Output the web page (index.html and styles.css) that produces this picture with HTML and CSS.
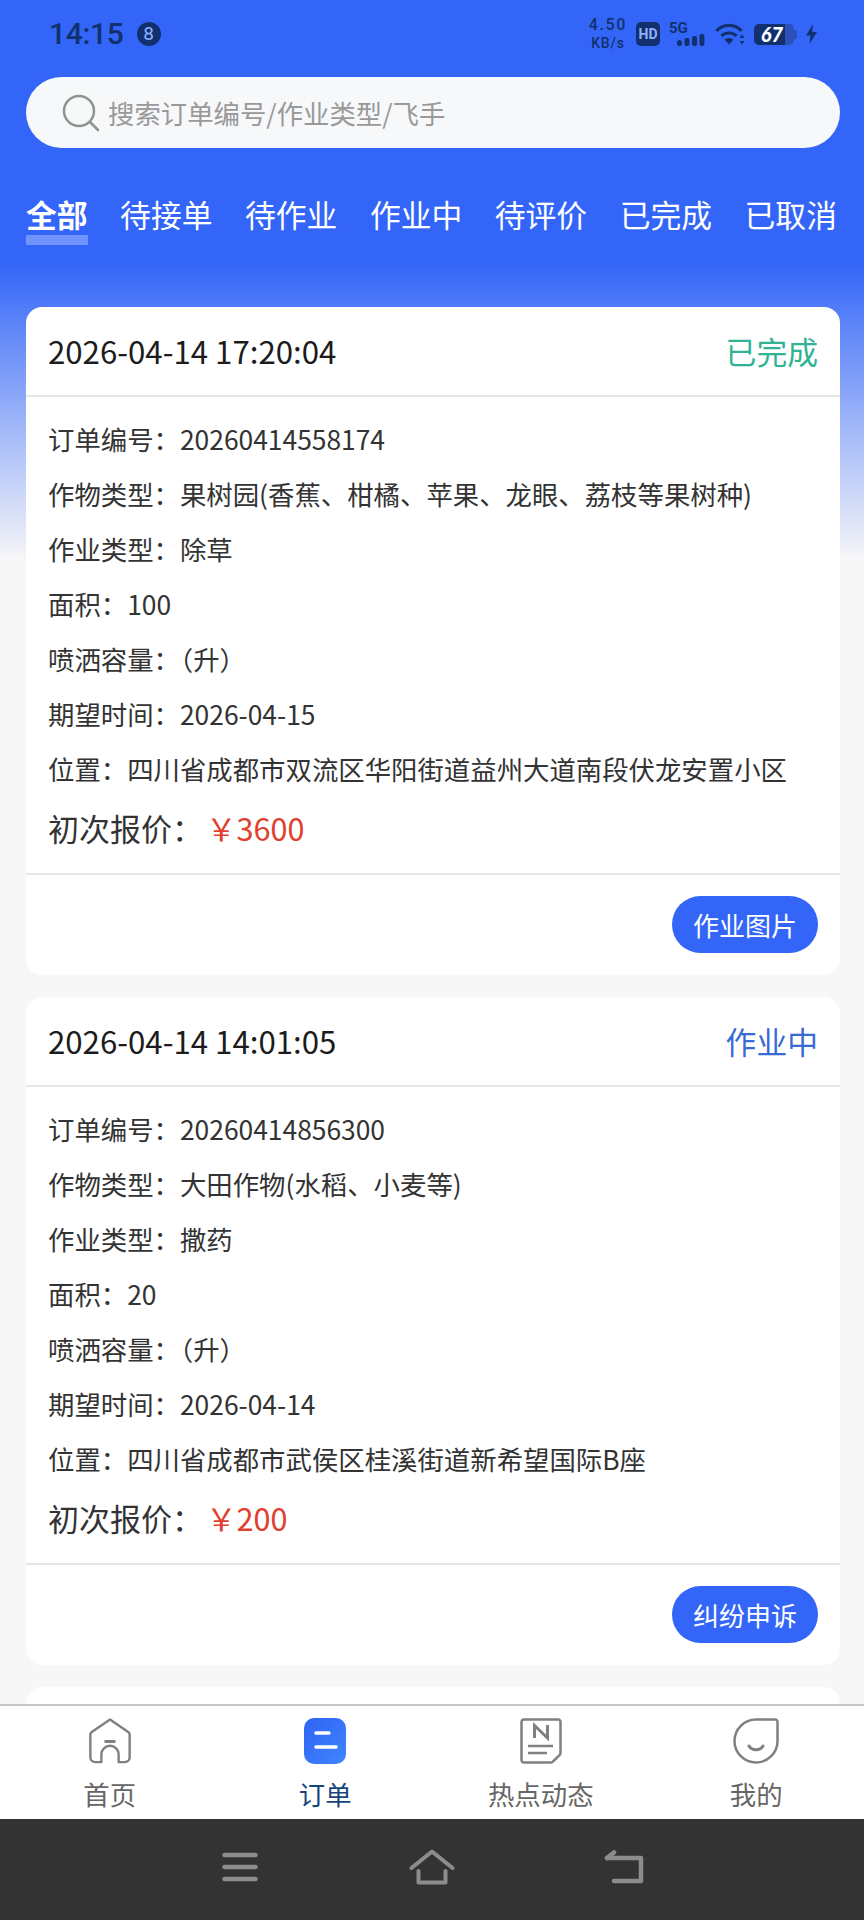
FILE: index.html
```html
<!DOCTYPE html>
<html lang="zh-CN">
<head>
    <meta charset="UTF-8">
    <meta name="viewport" content="width=device-width, initial-scale=1.0">
    <title>订单</title>
    <link rel="stylesheet" href="styles.css">
</head>
<body>
    <div class="page">
        <div class="status-bar">
            <div class="status-left">
                <span class="status-time">14:15</span>
                <span class="status-badge">8</span>
            </div>
            <div class="status-right">
                <div class="net-speed"><span>4.50</span><span>KB/s</span></div>
                <span class="hd-badge">HD</span>
                <div class="signal">
                    <span class="signal-label">5G</span>
                    <svg width="28" height="12" viewBox="0 0 28 12"><rect x="0" y="6" width="5" height="6" rx="2.5"/><rect x="7.5" y="4" width="5" height="8" rx="2"/><rect x="15" y="2" width="5" height="10" rx="2"/><rect x="22.500" y="0" width="5" height="12" rx="2"/></svg>
                </div>
                <svg class="wifi" width="30" height="22" viewBox="0 0 30 22" fill="none" stroke="#12306e" stroke-width="3.200"><path d="M1.500 8C8 .5 20 .5 26.500 8"/><path d="M6.500 13C10 9 18 9 21.500 13"/><path d="M14 21.500L9.500 16.500C12 14.500 16 14.500 18.500 16.500z" fill="#12306e" stroke="none"/><path d="M27 11.500l2.500 3.500h-5zM27 21.500l2.500-3.500h-5z" fill="#12306e" stroke="none"/></svg>
                <div class="battery"><span class="battery-level">67</span><span class="battery-tip"></span></div>
                <svg width="11" height="20" viewBox="0 0 11 20"><path d="M7 0L0 11.500h4.500L3.500 20 11 8H6.200z" fill="#12306e"/></svg>
            </div>
        </div>

        <div class="search-wrap">
            <div class="search-box">
                <svg width="38" height="38" viewBox="0 0 38 38" fill="none" stroke="#8f9493" stroke-width="2.500"><circle cx="17" cy="17" r="15"/><path d="M28 28l8 8" stroke-linecap="round"/></svg>
                <span>搜索订单编号/作业类型/飞手</span>
            </div>
        </div>

        <div class="tabs">
            <span class="tab tab-active">全部</span>
            <span class="tab">待接单</span>
            <span class="tab">待作业</span>
            <span class="tab">作业中</span>
            <span class="tab">待评价</span>
            <span class="tab">已完成</span>
            <span class="tab">已取消</span>
        </div>

        <div class="order-list">
            <div class="order-card">
                <div class="order-head">
                    <span class="order-date">2026-04-14 17:20:04</span>
                    <span class="order-status status-done">已完成</span>
                </div>
                <div class="order-body">
                    <div class="order-row">订单编号：20260414558174</div>
                    <div class="order-row">作物类型：果树园(香蕉、柑橘、苹果、龙眼、荔枝等果树种)</div>
                    <div class="order-row">作业类型：除草</div>
                    <div class="order-row">面积：100</div>
                    <div class="order-row">喷洒容量：（升）</div>
                    <div class="order-row">期望时间：2026-04-15</div>
                    <div class="order-row">位置：四川省成都市双流区华阳街道益州大道南段伏龙安置小区</div>
                    <div class="order-price">初次报价：<span class="price-value">￥3600</span></div>
                </div>
                <div class="order-foot"><button class="order-btn">作业图片</button></div>
            </div>

            <div class="order-card">
                <div class="order-head">
                    <span class="order-date">2026-04-14 14:01:05</span>
                    <span class="order-status status-working">作业中</span>
                </div>
                <div class="order-body">
                    <div class="order-row">订单编号：20260414856300</div>
                    <div class="order-row">作物类型：大田作物(水稻、小麦等)</div>
                    <div class="order-row">作业类型：撒药</div>
                    <div class="order-row">面积：20</div>
                    <div class="order-row">喷洒容量：（升）</div>
                    <div class="order-row">期望时间：2026-04-14</div>
                    <div class="order-row">位置：四川省成都市武侯区桂溪街道新希望国际B座</div>
                    <div class="order-price">初次报价：<span class="price-value">￥200</span></div>
                </div>
                <div class="order-foot"><button class="order-btn">纠纷申诉</button></div>
            </div>

            <div class="order-card"></div>
        </div>

        <div class="tabbar">
            <div class="tabbar-item">
                <svg width="46" height="48" viewBox="0 0 46 48" fill="none" stroke="#808080" stroke-width="2.500" stroke-linejoin="round" stroke-linecap="round"><path d="M23 1.500L42 14.500a3.500 3.500 0 0 1 1.500 3V41a5 5 0 0 1-5 5H32V38a9 9 0 0 0-18 0v8H7.500a5 5 0 0 1-5-5V17.500a3.500 3.500 0 0 1 1.500-3z"/><path d="M18.500 24.500h9" stroke-width="3"/></svg>
                <span>首页</span>
            </div>
            <div class="tabbar-item tabbar-active">
                <svg width="42" height="46" viewBox="0 0 42 46"><defs><linearGradient id="orderFill" x1="0" y1="0" x2="1" y2="1"><stop offset="0" stop-color="#2f62f2"/><stop offset="1" stop-color="#3f86ff"/></linearGradient></defs><rect width="42" height="46" rx="10" fill="url(#orderFill)"/><path d="M12 15h13M12 29h20" stroke="#fff" stroke-width="3.500" stroke-linecap="round"/></svg>
                <span>订单</span>
            </div>
            <div class="tabbar-item">
                <svg width="42" height="46" viewBox="0 0 42 46" fill="none" stroke="#808080" stroke-width="2.500"><path d="M4 1.500h34a2.500 2.500 0 0 1 2.500 2.500v31a3 3 0 0 1-1 2.200l-6.500 6.300a3 3 0 0 1-2 1H4A2.500 2.500 0 0 1 1.500 42V4A2.500 2.500 0 0 1 4 1.500z" stroke-linejoin="round"/><path d="M14.500 20V7.500L27.500 20V7" stroke-width="3"/><path d="M8 28h25" stroke-width="2.500"/><path d="M8 35h19" stroke-width="2.500"/></svg>
                <span>热点动态</span>
            </div>
            <div class="tabbar-item">
                <svg width="46" height="46" viewBox="0 0 46 46" fill="none" stroke="#808080" stroke-width="2.500"><path d="M23 1.500h19a2.500 2.500 0 0 1 2.500 2.500v19A21.500 21.500 0 1 1 23 1.500z"/><path d="M16 28c3 5 11 5 14 0" stroke-width="3" stroke-linecap="round"/></svg>
                <span>我的</span>
            </div>
        </div>

        <div class="nav-bar">
            <svg width="36" height="30" viewBox="0 0 36 30" fill="none" stroke="#8c8c8c" stroke-width="4.500" stroke-linecap="round"><path d="M2.500 3h31M2.500 15h31M2.500 27h31"/></svg>
            <svg width="46" height="36" viewBox="0 0 46 36" fill="none" stroke="#8c8c8c" stroke-width="4" stroke-linecap="round" stroke-linejoin="round"><path d="M2.500 19L23 2.500 43.500 19"/><path d="M9.500 22v11.500h27V22"/></svg>
            <svg width="40" height="34" viewBox="0 0 40 34" fill="none" stroke="#8c8c8c" stroke-width="4.500" stroke-linecap="round" stroke-linejoin="round"><path d="M10 31h27V8H3"/><path d="M10 2.500L3 8" stroke-width="4.500"/></svg>
        </div>
    </div>
</body>
</html>
```

FILE: styles.css
```css
* {
    box-sizing: border-box;
}
html, body {
    margin: 0;
    padding: 0;
}
body {
    font-family: "Noto Sans CJK SC", "Noto Sans", sans-serif;
    color: #333;
}
.page {
    width: 864px;
    height: 1920px;
    display: flex;
    flex-direction: column;
    overflow: hidden;
    background: linear-gradient(to bottom, #3366f8 0, #3366f8 262px, #f7f7f8 560px);
}

/* status bar */
.status-bar {
    height: 68px;
    flex-shrink: 0;
    padding: 0 47px 0 49px;
    display: flex;
    justify-content: space-between;
    align-items: center;
    color: #12306e;
}
.status-left {
    display: flex;
    align-items: center;
    gap: 13px;
}
.status-time {
    font-family: Roboto, sans-serif;
    font-size: 30px;
    line-height: 34px;
    font-weight: 500;
    letter-spacing: -0.3px;
}
.status-badge {
    width: 24px;
    height: 24px;
    border-radius: 50%;
    background: #12306e;
    color: #8fb0ff;
    font-family: Roboto, sans-serif;
    font-size: 19px;
    line-height: 24px;
    text-align: center;
}
.status-right {
    display: flex;
    align-items: center;
    gap: 9px;
}
.net-speed {
    display: flex;
    flex-direction: column;
    align-items: center;
    font-family: Roboto, sans-serif;
    font-weight: 500;
    font-size: 16px;
    line-height: 18px;
    letter-spacing: 1.6px;
}
.net-speed span + span {
    font-size: 14px;
    line-height: 18px;
    letter-spacing: 0.8px;
}
.hd-badge {
    width: 24px;
    height: 24px;
    border-radius: 5px;
    background: #12306e;
    color: #8fb0ff;
    font-family: Roboto, sans-serif;
    font-weight: 700;
    font-size: 14px;
    line-height: 24px;
    text-align: center;
}
.signal {
    width: 36px;
    height: 24px;
    position: relative;
    fill: #12306e;
}
.signal-label {
    position: absolute;
    left: 0;
    top: -2px;
    font-family: Roboto, sans-serif;
    font-weight: 700;
    font-size: 15px;
    line-height: 16px;
}
.signal svg {
    position: absolute;
    right: 0;
    bottom: 0;
}
.wifi {
    margin-left: 1px;
}
.battery {
    display: flex;
    align-items: center;
    width: 43px;
    height: 21px;
}
.battery-level {
    width: 40px;
    height: 21px;
    border-radius: 5px;
    background: linear-gradient(to right, #12306e 0, #12306e 78%, #2b50b8 78%);
    color: #fff;
    font-family: Lato, sans-serif;
    font-style: italic;
    font-weight: 900;
    font-size: 20px;
    line-height: 21px;
    text-align: center;
    padding-right: 4px;
}
.battery-tip {
    width: 3px;
    height: 9px;
    background: #2b50b8;
    border-radius: 0 2px 2px 0;
}

/* search */
.search-wrap {
    padding: 9px 24px 0 26px;
    flex-shrink: 0;
}
.search-box {
    height: 71px;
    border-radius: 36px;
    background: #f7f8fa;
    display: flex;
    align-items: center;
    gap: 8px;
    padding-left: 36px;
    font-size: 26.400px;
    color: #999;
}

/* tabs */
.tabs {
    flex-shrink: 0;
    height: 159px;
    padding: 44px 27px 0 26px;
    display: flex;
    justify-content: space-between;
    align-items: flex-start;
}
.tab {
    font-size: 30.800px;
    line-height: 43px;
    color: #fff;
}
.tab-active {
    font-weight: 700;
    border-bottom: 10px solid #6f93ff;
}

/* orders */
.order-list {
    flex: 1;
    min-height: 0;
    overflow: hidden;
    padding: 0 24px 0 26px;
    display: flex;
    flex-direction: column;
    gap: 22px;
}
.order-card {
    flex-shrink: 0;
    background: #fff;
    border-radius: 16px;
    min-height: 668px;
}
.order-head {
    height: 90px;
    padding: 0 22px 2px;
    display: flex;
    justify-content: space-between;
    align-items: center;
    border-bottom: 2px solid #e6e6e6;
}
.order-date {
    font-size: 31.200px;
    color: #1c1c1c;
}
.order-status {
    font-size: 30.800px;
}
.status-done {
    color: #2fb394;
}
.status-working {
    color: #3a6ad4;
}
.order-body {
    padding: 14px 22px 0;
    height: 476px;
}
.order-row {
    font-size: 26.400px;
    line-height: 55px;
    white-space: nowrap;
}
.order-price {
    font-size: 31px;
    line-height: 64px;
}
.price-value {
    margin-left: 3px;
    font-size: 30.600px;
    color: #e0402d;
}
.order-foot {
    height: 102px;
    padding: 21px 22px 0;
    border-top: 2px solid #e6e6e6;
    display: flex;
    justify-content: flex-end;
    align-items: flex-start;
}
.order-btn {
    width: 146px;
    height: 57px;
    padding: 0;
    border: none;
    border-radius: 29px;
    background: #3366f8;
    color: #fff;
    font-family: inherit;
    font-size: 26px;
    cursor: pointer;
}

/* bottom tab bar */
.tabbar {
    flex-shrink: 0;
    height: 115px;
    padding-left: 2px;
    background: #fff;
    border-top: 2px solid #c8c8c8;
    display: grid;
    grid-template-columns: repeat(4, 1fr);
}
.tabbar-item {
    display: flex;
    flex-direction: column;
    align-items: center;
    padding-top: 12px;
    font-size: 26.400px;
    line-height: 36px;
    color: #666;
}
.tabbar-item svg {
    height: 46px;
    margin-bottom: 12px;
}
.tabbar-active {
    color: #16447c;
}

/* system nav */
.nav-bar {
    flex-shrink: 0;
    height: 101px;
    background: #333;
    padding: 0 144px 6px;
    display: grid;
    grid-template-columns: repeat(3, 1fr);
    justify-items: center;
    align-items: center;
}
```
